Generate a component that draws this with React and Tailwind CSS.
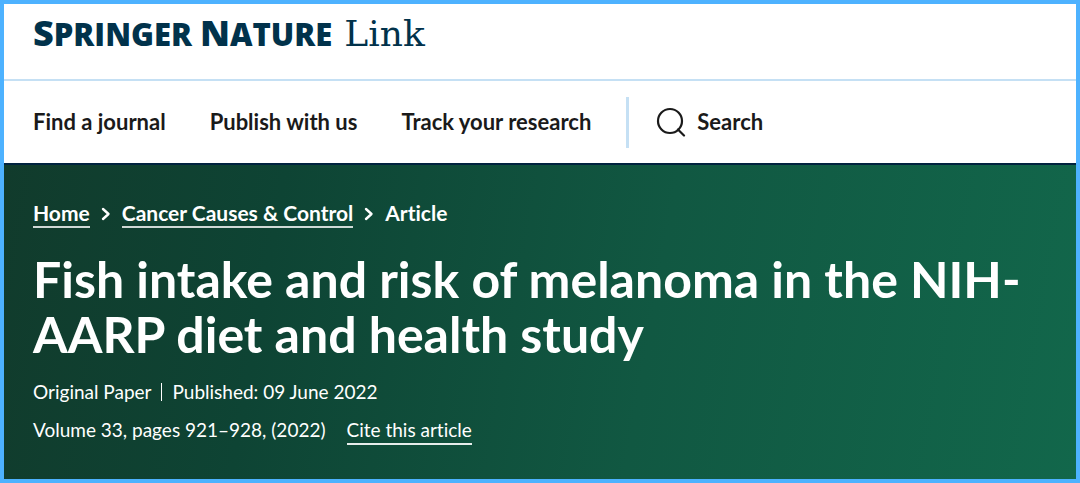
const navItems = ["Find a journal", "Publish with us", "Track your research"];

const Logo = () => (
  <a href="#" aria-label="Springer Nature Link" className="flex items-baseline gap-3 text-[#01324b] leading-[40px] whitespace-nowrap">
    <span className="font-['Open_Sans','Noto_Sans',sans-serif] font-extrabold text-[31px]">
      <span className="text-[36px]">S</span>PRINGER <span className="text-[36px]">N</span>ATURE
    </span>
    <span className="font-['DejaVu_Serif',serif] text-[36px]">Link</span>
  </a>
);

const SearchIcon = () => (
  <svg width="30" height="30" viewBox="0 0 30 30" fill="none" stroke="currentColor" strokeWidth="2.2" strokeLinecap="round" aria-hidden="true">
    <circle cx="14" cy="14" r="12" />
    <path d="M22 22.5 28 28.5" />
  </svg>
);

const Chevron = () => (
  <svg width="10" height="14" viewBox="0 0 10 14" fill="none" stroke="currentColor" strokeWidth="2.4" strokeLinecap="round" strokeLinejoin="round" aria-hidden="true">
    <path d="M2 2 7.5 7 2 12" />
  </svg>
);

const Header = () => (
  <header className="bg-white text-[#1a1a1a]">
    <div className="flex h-[77px] items-start border-b-2 border-[#c5e0f4] px-[29px] pt-[9px]">
      <Logo />
    </div>
    <div className="flex h-[82px] items-center px-[29px] text-[22px] font-bold leading-[30px] whitespace-nowrap">
      <nav className="flex gap-11">
        {navItems.map((item) => (
          <a key={item} href="#">{item}</a>
        ))}
      </nav>
      <div className="ml-[35px] flex h-[51px] items-center border-l-3 border-[#c5e0f4] pl-[27px]">
        <a href="#" className="flex items-center gap-[11px]">
          <SearchIcon />
          Search
        </a>
      </div>
    </div>
  </header>
);

const ArticleHero = () => (
  <main className="grow border-t-2 border-[#01233f] bg-linear-[100deg,#113b2c_0%,#0e4434_25%,#115842_60%,#12674b_100%] px-[29px] pt-[35px] pb-8 text-white">
    <nav aria-label="Breadcrumb">
      <ol className="flex items-center gap-[11px] text-[21px] font-bold leading-[26px] whitespace-nowrap">
        <li><a href="#" className="block border-b-2 border-white/80">Home</a></li>
        <li><Chevron /></li>
        <li><a href="#" className="block border-b-2 border-white/80">Cancer Causes &amp; Control</a></li>
        <li><Chevron /></li>
        <li className="pb-[2px]">Article</li>
      </ol>
    </nav>
    <h1 className="mt-6 text-[50px] font-bold leading-[55px]">
      Fish intake and risk of melanoma in the NIH-AARP diet and health study
    </h1>
    <ul className="mt-[17px] flex items-center text-[19px] leading-[26px]">
      <li className="flex items-center after:mx-[10px] after:h-[18px] after:w-px after:bg-white">Original Paper</li>
      <li>Published: <time dateTime="2022-06-09">09 June 2022</time></li>
    </ul>
    <div className="mt-3 flex gap-[21px] text-[19px] leading-[26px]">
      <p>Volume 33, pages 921–928, (2022)</p>
      <a href="#" className="border-b-2 border-white/90">Cite this article</a>
    </div>
  </main>
);

export default function App() {
  return (
    <div className="flex min-h-screen flex-col border-4 border-[#4db2ff] font-['Lato',sans-serif] [font-variant-ligatures:no-common-ligatures]">
      <Header />
      <ArticleHero />
    </div>
  );
}
